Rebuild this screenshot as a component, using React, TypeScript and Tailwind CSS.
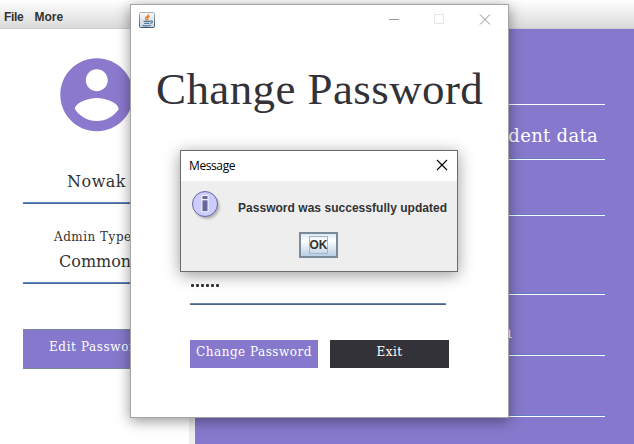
import type { ReactNode } from 'react';

const serif = "font-['DejaVu_Serif',serif]";

function MenuBar() {
  return (
    <div className="flex h-[29px] items-center gap-[11px] border-b border-[#cccccc] bg-linear-to-b from-white to-[#dadada] pt-[5px] pl-1 font-['Liberation_Sans',sans-serif] text-[12px] leading-[14px] font-bold text-[#333333]">
      <span className="tracking-[-0.3px]">File</span>
      <span>More</span>
    </div>
  );
}

function Rule() {
  return <div className="h-[2px] w-full border-t border-[#5b86c8] bg-[#4c6694]" />;
}

function Sidebar() {
  return (
    <div className={`w-[189px] shrink-0 bg-white pl-[23px] text-[#333333] ${serif}`}>
      <div className="flex h-[124px] w-[147px] items-start justify-center pt-[22px]">
        <svg viewBox="0 0 24 24" className="h-[87.6px] w-[87.6px] shrink-0" fill="#8b79cd">
          <path d="M12 2C6.48 2 2 6.48 2 12s4.48 10 10 10 10-4.48 10-10S17.52 2 12 2zm0 3c1.66 0 3 1.34 3 3s-1.34 3-3 3-3-1.34-3-3 1.34-3 3-3zm0 14.2c-2.5 0-4.71-1.28-6-3.22.03-1.99 4-3.08 6-3.08 1.99 0 5.97 1.09 6 3.08-1.29 1.94-3.5 3.22-6 3.22z" />
        </svg>
      </div>
      <div className="h-[49px] pt-[18px] pl-[44px] text-[16px] leading-[22px] tracking-[0.5px]">Nowak</div>
      <Rule />
      <div className="h-[78px] pt-[24px] whitespace-nowrap">
        <div className="pl-[31px] text-[12px] leading-[18px] tracking-[0.5px]">Admin Type:</div>
        <div className="pt-[5px] pl-[36px] text-[16px] leading-[22px]">Common</div>
      </div>
      <Rule />
      <div className="mt-[45px] h-[40px] w-[147px] border border-[#7a8a99] bg-[#8679cd] pt-[8px] pl-[25px] text-[12px] leading-[18px] tracking-[0.6px] whitespace-nowrap text-white">
        Edit Password
      </div>
    </div>
  );
}

function MenuRow({ className, children }: { className: string; children?: ReactNode }) {
  return (
    <div className={`flex shrink-0 items-end justify-end border-b border-white ${className}`}>{children}</div>
  );
}

function MainPanel() {
  return (
    <div className={`flex flex-1 flex-col bg-[#8679cd] pr-[29px] pl-[30px] text-white ${serif}`}>
      <MenuRow className="h-[76px]" />
      <MenuRow className="h-[55px] pr-[7px] pb-[10px] text-[18px] leading-[26px] tracking-[0.3px] shadow-[inset_0_-1px_#6480c4]">
        Student data
      </MenuRow>
      <MenuRow className="h-[56px] shadow-[inset_0_-1px_#6480c4]" />
      <MenuRow className="h-[79px] shadow-[inset_0_-1px_#6480c4]" />
      <MenuRow className="h-[61px] pr-[93px] pb-[10px] text-[18px] leading-[26px] shadow-[inset_0_-1px_#6480c4]">
        Data
      </MenuRow>
      <MenuRow className="h-[61px] shadow-[inset_0_-1px_#6480c4]" />
    </div>
  );
}

function JavaIcon() {
  return (
    <svg viewBox="0 0 16 16" className="h-4 w-4">
      <defs>
        <linearGradient id="cupTile" x1="0" y1="0" x2="0" y2="1">
          <stop offset="0" stopColor="#fafbfc" />
          <stop offset="1" stopColor="#cbd4dc" />
        </linearGradient>
        <linearGradient id="cupEdge" x1="0" y1="0" x2="0" y2="1">
          <stop offset="0" stopColor="#a4b0bc" />
          <stop offset="1" stopColor="#3d5973" />
        </linearGradient>
      </defs>
      <rect x="0.5" y="0.5" width="15" height="15" rx="1" fill="url(#cupTile)" stroke="url(#cupEdge)" />
      <path d="M9.7 2.2C10 4 6.2 4.8 6.6 6.5c.1.8.8 1.2 1 2M10.6 4.4C8.5 5.4 8.2 6 8.8 7c.2.5.1.9-.4 1.4" fill="none" stroke="#e97b20" strokeWidth="1.3" />
      <path d="M4.5 9.4h6.7M5.2 11.3h5.2M3.5 13.3c2.5.7 6.5.6 8.5-.1M11.2 9.2c3-1 2.8 1.6.2 2.2" fill="none" stroke="#537a9d" strokeWidth="1.2" />
    </svg>
  );
}

function PasswordWindow() {
  return (
    <div className="absolute top-[4px] left-[130px] flex h-[414px] w-[379px] flex-col border border-[#a6a6a6] bg-white shadow-[0_3px_13px_rgba(0,0,0,0.42)]">
      <div className="flex h-[30px] shrink-0 items-center pr-[17px] pl-2">
        <JavaIcon />
        <svg viewBox="0 0 102 12" className="ml-auto h-3 w-[102px]" fill="none" shapeRendering="crispEdges">
          <path d="M0 5.5h10" stroke="#999999" />
          <rect x="45.5" y="0.5" width="9" height="9" stroke="#e6e6e6" />
          <path d="M91 0.5l10 10M101 0.5l-10 10" stroke="#8e8e8e" shapeRendering="auto" />
        </svg>
      </div>
      <h1 className="h-[228px] pt-[29px] pl-[25px] font-['Liberation_Serif',serif] text-[45px] leading-[50px] tracking-[0.4px] whitespace-nowrap text-[#333238]">
        Change Password
      </h1>
      <div className="ml-[59px] flex h-[42px] w-[256px] flex-col justify-end">
        <div className="flex h-[19px] gap-[2px] pl-[1px]">
          {[0, 1, 2, 3, 4, 5].map((i) => (
            <span key={i} className="h-[3px] w-[3px] rounded-[1px] bg-[#333238]" />
          ))}
        </div>
        <div className="h-[2px] border-t border-[#6c86b4] bg-[#4c6288]" />
      </div>
      <div className={`mt-[35px] ml-[59px] flex gap-3 text-[12px] leading-[18px] tracking-[0.5px] text-white ${serif}`}>
        <button className="flex h-[28px] w-[128px] justify-center bg-[#8679cd] pt-[3px] whitespace-nowrap">Change Password</button>
        <button className="flex h-[28px] w-[119px] justify-center bg-[#333238] pt-[3px]">Exit</button>
      </div>
    </div>
  );
}

function InfoIcon() {
  return (
    <svg viewBox="0 0 32 32" className="h-8 w-8 shrink-0">
      <defs>
        <filter id="softShadow" x="-20%" y="-20%" width="150%" height="150%">
          <feGaussianBlur stdDeviation="1" />
        </filter>
      </defs>
      <circle cx="15" cy="15.5" r="12.5" fill="#777" opacity="0.5" filter="url(#softShadow)" />
      <circle cx="13" cy="13" r="12.5" fill="#ccccff" stroke="#666699" />
      <path d="M10 4.5h6v4.2h-6zM10 8.7h6v12h-6z" fill="#666699" stroke="#ffffff" strokeWidth="0.9" />
    </svg>
  );
}

function MessageDialog() {
  return (
    <div className="absolute top-[150px] left-[180px] flex h-[122px] w-[278px] flex-col border border-[#6b6b6b] bg-[#eeeeee] font-['Liberation_Sans',sans-serif] shadow-[0_3px_15px_rgba(0,0,0,0.4)]">
      <div className="flex h-[30px] shrink-0 items-center justify-between bg-white pr-[9px] pl-2 font-['Open_Sans',sans-serif] text-[12px] text-black">
        <span className="tracking-[-0.4px]">Message</span>
        <svg viewBox="0 0 12 12" className="mb-[2px] h-3 w-3" fill="none" stroke="#000000" strokeWidth="1.1">
          <path d="M1 1l10 10M11 1L1 11" />
        </svg>
      </div>
      <div className="flex h-[51px] pt-[10px] pl-[11px]">
        <InfoIcon />
        <p className="mt-[10px] ml-[14px] text-[12px] leading-[14px] font-bold tracking-[0.03px] whitespace-nowrap text-[#333333]">
          Password was successfully updated
        </p>
      </div>
      <button className="ml-[118px] flex h-[26px] w-[39px] items-center justify-center border-2 border-[#7a8a99] bg-linear-to-b from-[#dde8f3] via-white via-30% to-[#b8cfe5] text-[12px] leading-[14px] font-bold text-[#333333]">
        <span className="flex h-[18px] w-[19px] items-center justify-center border border-[#a3b8cc]">OK</span>
      </button>
    </div>
  );
}

export default function App() {
  return (
    <div className="relative h-[444px] w-[634px] overflow-hidden bg-[#eeeeee]">
      <div className="flex h-full flex-col">
        <MenuBar />
        <div className="flex flex-1 gap-[6px]">
          <Sidebar />
          <MainPanel />
        </div>
      </div>
      <PasswordWindow />
      <MessageDialog />
    </div>
  );
}
